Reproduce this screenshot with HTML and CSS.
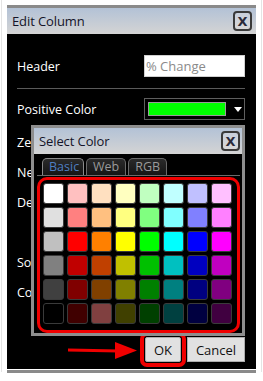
FILE: index.html
```html
<!DOCTYPE html>
<html>
<head>
<meta charset="utf-8">
<link rel="stylesheet" href="styles.css">
</head>
<body>
<div class="page">
  <div class="window">
    <div class="titlebar">
      <span class="title">Edit Column</span>
      <span class="close">X</span>
    </div>
    <div class="content">
      <div class="row">
        <span class="label">Header</span>
        <div class="input">% Change</div>
      </div>
      <div class="sep"></div>
      <div class="row">
        <span class="label">Positive Color</span>
        <div class="combo"><span class="swatch-green"></span><span class="caret"></span></div>
      </div>
      <div class="rows">
        <div class="lrow">Zero Color</div>
        <div class="lrow">Negative Color</div>
        <div class="lrow">Decimals</div>
        <div class="lrow"></div>
        <div class="lrow">Sort Order</div>
        <div class="lrow">Column Width</div>
      </div>
      <div class="buttons">
        <button class="btn ok">OK</button>
        <button class="btn cancel">Cancel</button>
      </div>
    </div>

    <div class="popup">
      <div class="titlebar small">
        <span class="title">Select Color</span>
        <span class="close">X</span>
      </div>
      <div class="popbody">
        <div class="tabs">
          <span class="tab active">Basic</span>
          <span class="tab">Web</span>
          <span class="tab">RGB</span>
        </div>
        <div class="palette">
          <div class="grid">
            <span style="background:#ffffff"></span><span style="background:#ffc0c0"></span><span style="background:#ffe0c0"></span><span style="background:#ffffc0"></span><span style="background:#c0ffc0"></span><span style="background:#c0ffff"></span><span style="background:#c0c0ff"></span><span style="background:#ffc0ff"></span>
            <span style="background:#e0e0e0"></span><span style="background:#ff8080"></span><span style="background:#ffc080"></span><span style="background:#ffff80"></span><span style="background:#80ff80"></span><span style="background:#80ffff"></span><span style="background:#8080ff"></span><span style="background:#ff80ff"></span>
            <span style="background:#c0c0c0"></span><span style="background:#ff0000"></span><span style="background:#ff8000"></span><span style="background:#ffff00"></span><span style="background:#00ff00"></span><span style="background:#00ffff"></span><span style="background:#0000ff"></span><span style="background:#ff00ff"></span>
            <span style="background:#808080"></span><span style="background:#c00000"></span><span style="background:#c04000"></span><span style="background:#c0c000"></span><span style="background:#00c000"></span><span style="background:#00c0c0"></span><span style="background:#0000c0"></span><span style="background:#c000c0"></span>
            <span style="background:#404040"></span><span style="background:#800000"></span><span style="background:#804000"></span><span style="background:#808000"></span><span style="background:#008000"></span><span style="background:#008080"></span><span style="background:#000080"></span><span style="background:#800080"></span>
            <span style="background:#000000"></span><span style="background:#400000"></span><span style="background:#804040"></span><span style="background:#404000"></span><span style="background:#004000"></span><span style="background:#004040"></span><span style="background:#000040"></span><span style="background:#400040"></span>
          </div>
        </div>
      </div>
    </div>

    <svg class="arrow" width="80" height="20" viewBox="0 0 80 20">
      <line x1="1" y1="9" x2="52" y2="10" stroke="#f00000" stroke-width="3"/>
      <polygon points="48,1 70,9.5 48,18" fill="#f00000"/>
    </svg>
  </div>
  <div class="shadowbar"></div>
</div>
</body>
</html>
```

FILE: styles.css
```css
* { box-sizing: border-box; }
html, body { margin: 0; padding: 0; background: #fff; }
body {
  width: 263px;
  height: 381px;
  overflow: hidden;
  font-family: "Open Sans", "Noto Sans", sans-serif;
}
.page {
  padding: 5px 0 0 5px;
  border-left: 1px solid #e4e4e4;
  border-right: 1px solid #e4e4e4;
  width: 261px;
  height: 372px;
  margin-left: 1px;
}
.window {
  position: relative;
  width: 249px;
  border-top: 3px solid #8a8a8a;
  background: #000;
}
.shadowbar {
  width: 249px;
  height: 3px;
  margin-top: 1px;
  background: #8a8a8a;
}
.titlebar {
  height: 26px;
  display: flex;
  align-items: center;
  justify-content: space-between;
  padding: 0 4px 0 5px;
  background: linear-gradient(#b3c2d6, #d4d4d4);
}
.title {
  font-size: 13px;
  color: #141428;
  letter-spacing: -0.1px;
}
.close {
  width: 19px;
  height: 20px;
  border: 2px solid #3a3a3a;
  border-radius: 4px;
  display: flex;
  align-items: center;
  justify-content: center;
  font-family: "DejaVu Sans", sans-serif;
  font-weight: bold;
  font-size: 13px;
  color: #2a2a3a;
  background: linear-gradient(#c8d0dc, #d8d8d8);
}
.content {
  padding: 21px 11px 7px 10px;
  color: #fff;
}
.row {
  height: 22px;
  display: flex;
  align-items: center;
  justify-content: space-between;
}
.label, .lrow {
  font-size: 12.5px;
  color: #fff;
}
.input {
  width: 101px;
  height: 22px;
  background: #fff;
  border: 1px solid #d0d0d0;
  color: #8a8a8a;
  font-size: 13px;
  line-height: 20px;
  padding-left: 1px;
}
.sep {
  height: 1px;
  background: #5a5a5a;
  margin: 11px 0 9px;
}
.combo {
  width: 101px;
  height: 22px;
  border: 1px solid #5e5e5e;
  display: flex;
  align-items: center;
  padding-left: 3px;
}
.swatch-green {
  width: 78px;
  height: 14px;
  background: #00ff00;
  border: 1px solid #9a9a9a;
}
.caret {
  margin-left: 8px;
  width: 0;
  height: 0;
  border-left: 4px solid transparent;
  border-right: 4px solid transparent;
  border-top: 5px solid #fff;
}
.rows {
  margin-top: 8px;
}
.lrow {
  height: 30px;
  line-height: 30px;
  white-space: nowrap;
}
.buttons {
  margin-top: 29px;
  display: flex;
  justify-content: flex-end;
  gap: 6px;
}
.btn {
  height: 25px;
  background: #e1e1e1;
  border: 1px solid #adadad;
  font-family: "Open Sans", "Noto Sans", sans-serif;
  font-size: 13px;
  color: #111;
  padding: 0;
}
.ok {
  width: 36px;
  outline: 4px solid #f00000;
  outline-offset: 1px;
  border-radius: 2px;
}
.cancel {
  width: 58px;
}
.popup {
  position: absolute;
  left: 24px;
  top: 117px;
  width: 214px;
  height: 211px;
  border: 3px solid #8e8e8e;
  background: #000;
}
.titlebar.small {
  padding: 0 2px 0 5px;
}
.popbody {
  padding: 4px 2px 0 3px;
}
.tabs {
  display: flex;
  gap: 2px;
  padding-left: 5px;
  border-bottom: 1px solid #6a6a6a;
  margin-bottom: 1px;
}
.tab {
  height: 17px;
  border: 1px solid #6a6a6a;
  border-bottom: none;
  border-radius: 5px 5px 0 0;
  font-size: 12.5px;
  line-height: 16px;
  color: #9a9a9a;
  padding: 0 6px;
  background: linear-gradient(#2a2a2a, #151515);
}
.tab.active {
  color: #4f7fc2;
  border-color: #8a8a8a;
  width: 42px;
}
.palette {
  height: 156px;
  border: 3px solid #f00000;
  border-radius: 10px;
  padding: 3px;
}
.grid {
  display: grid;
  grid-template-columns: repeat(8, 21px);
  grid-auto-rows: 21px;
  gap: 3px;
}
.grid span {
  border: 1px solid #3a3a3a;
  border-radius: 3px;
}
.arrow {
  position: absolute;
  left: 60px;
  top: 333px;
}
```
